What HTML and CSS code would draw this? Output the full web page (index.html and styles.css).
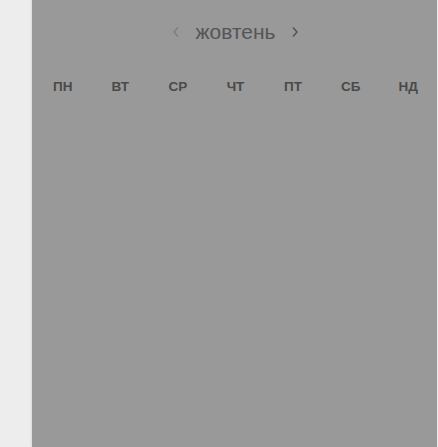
FILE: index.html
```html
<!DOCTYPE html>
<html lang="uk">
<head>
<meta charset="utf-8">
<link rel="stylesheet" href="styles.css">
</head>
<body>
<div class="panel">
  <div class="header">
    <svg class="nav nav-prev" width="8" height="12" viewBox="0 0 8 12"><path d="M6 1.5 L2 6 L6 10.5" fill="none" stroke="currentColor" stroke-width="1.4"/></svg>
    <span class="month">жовтень</span>
    <svg class="nav nav-next" width="8" height="12" viewBox="0 0 8 12"><path d="M2 1.5 L6 6 L2 10.5" fill="none" stroke="currentColor" stroke-width="1.4"/></svg>
  </div>
  <div class="weekdays">
    <div class="wd">ПН</div>
    <div class="wd">ВТ</div>
    <div class="wd">СР</div>
    <div class="wd">ЧТ</div>
    <div class="wd">ПТ</div>
    <div class="wd">СБ</div>
    <div class="wd">НД</div>
  </div>
</div>
</body>
</html>
```
FILE: styles.css
```css
html, body {
  margin: 0;
  padding: 0;
  height: 100%;
  background: #ededed;
  font-family: "Liberation Sans", Arial, sans-serif;
  overflow: hidden;
}
.panel {
  margin-left: 32px;
  width: 405px;
  height: 447px;
  background: #999999;
  box-shadow: -1px 0 2px rgba(0,0,0,0.08);
  box-sizing: border-box;
  padding-left: 2px;
}
.header {
  display: flex;
  justify-content: center;
  align-items: center;
  gap: 15px;
  padding-top: 20px;
  height: 24px;
}
.month {
  font-size: 21px;
  color: #555;
}
.nav {
  display: block;
}
.nav-prev { color: #7e7e7e; }
.nav-next { color: #505050; }
.weekdays {
  display: grid;
  grid-template-columns: repeat(7, 1fr);
  margin-top: 35px;
}
.wd {
  text-align: center;
  font-size: 13.5px;
  font-weight: bold;
  color: #4a4a4a;
}
```
